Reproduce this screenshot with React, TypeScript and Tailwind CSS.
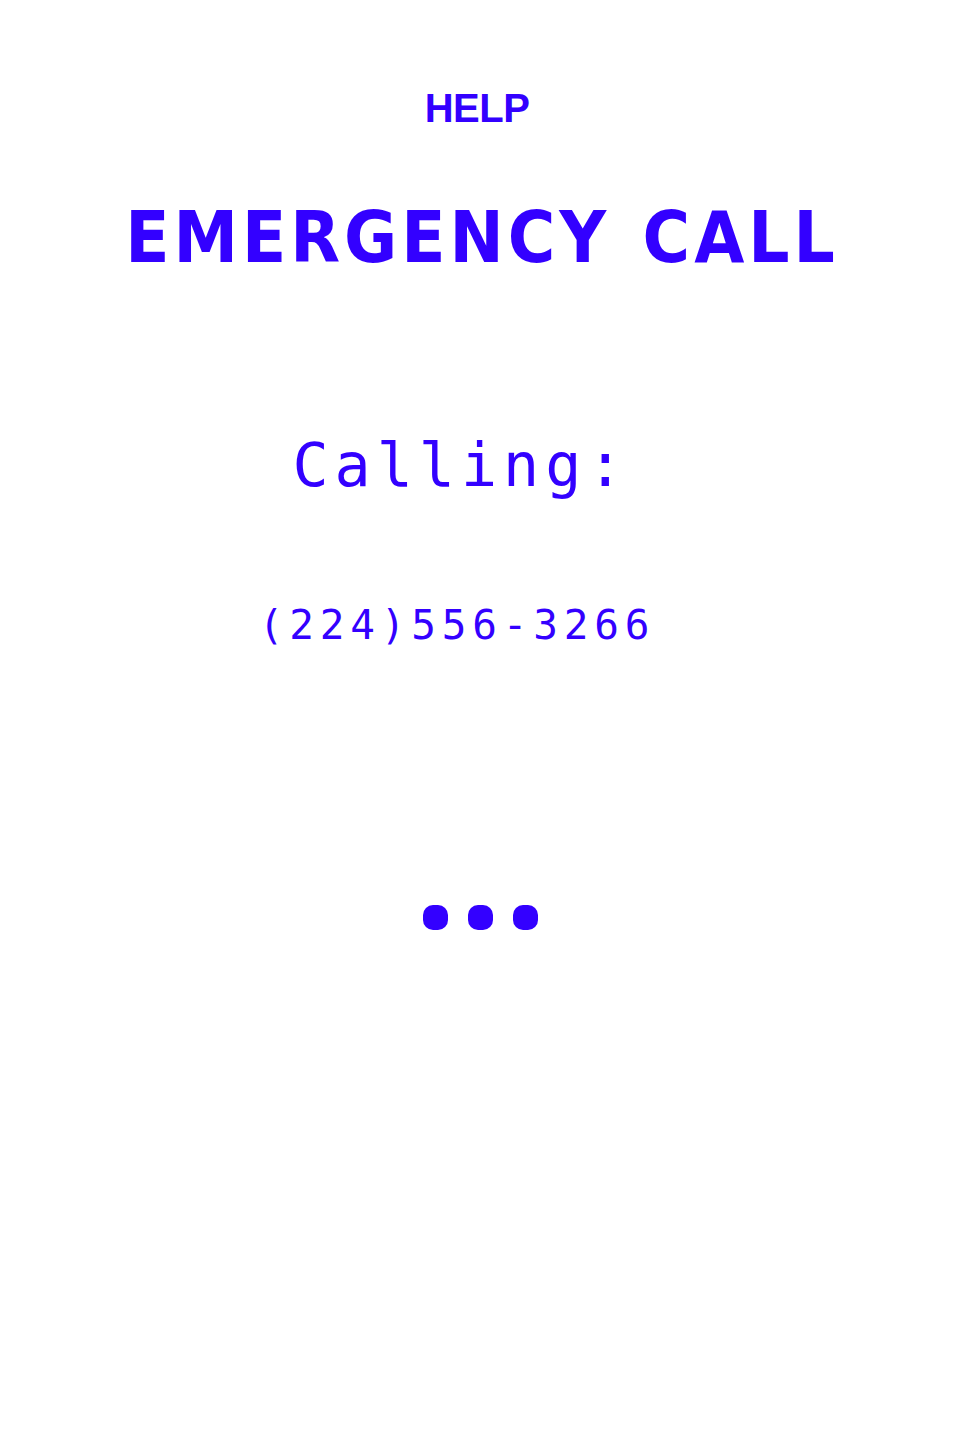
export default function App() {
  return (
    <div className="min-h-[1440px] w-full bg-white text-[#3300ff] flex flex-col items-center">
      {/* Header */}
      <div className="mt-[88px] mr-[6px] text-[40px] leading-none font-bold tracking-[-0.5px] font-['Liberation_Sans',sans-serif]">
        HELP
      </div>
      <h1 className="mt-[73px] text-[72px] leading-none font-bold tracking-[4px] [word-spacing:6px] pl-[4px] font-['DejaVu_Sans_Condensed','DejaVu_Sans',sans-serif]">
        EMERGENCY CALL
      </h1>

      {/* Call status */}
      <div className="mt-[162px] mr-[38px] text-[60px] leading-none tracking-[6px] font-['DejaVu_Sans_Mono',monospace]">
        Calling:
      </div>
      <div className="mt-[110px] mr-[46px] text-[41px] leading-none tracking-[5.8px] font-['DejaVu_Sans_Mono',monospace]">
        (224)556-3266
      </div>

      {/* Loading dots */}
      <div className="mt-[259px] flex gap-[20px]">
        <span className="block w-[25px] h-[25px] rounded-[10px] bg-[#3300ff]" />
        <span className="block w-[25px] h-[25px] rounded-[10px] bg-[#3300ff]" />
        <span className="block w-[25px] h-[25px] rounded-[10px] bg-[#3300ff]" />
      </div>
    </div>
  );
}
